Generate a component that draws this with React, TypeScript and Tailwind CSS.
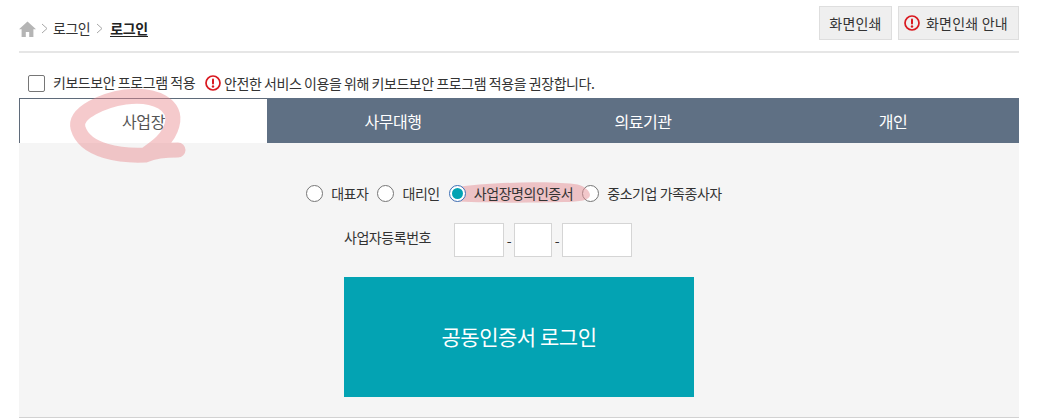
const font = "font-['Noto_Sans_CJK_KR','Noto_Sans',sans-serif]";

function AlertIcon({ size = 16 }: { size?: number }) {
  return (
    <svg width={size} height={size} viewBox="0 0 16 16" className="shrink-0">
      <circle cx="8" cy="8" r="7" fill="none" stroke="#d9181f" strokeWidth="1.7" />
      <rect x="7" y="3.5" width="2" height="6" rx="1" fill="#d9181f" />
      <circle cx="8" cy="11.5" r="1.2" fill="#d9181f" />
    </svg>
  );
}

function Chevron() {
  return (
    <svg width="7" height="11" viewBox="0 0 7 11" className="shrink-0">
      <path d="M1 1l5 4.5L1 10" fill="none" stroke="#a8a8a8" strokeWidth="1" />
    </svg>
  );
}

function Radio({ label, checked }: { label: string; checked?: boolean }) {
  return (
    <label className="flex items-center gap-[8px]">
      {checked ? (
        <span className="relative z-10 flex h-[17px] w-[17px] items-center justify-center rounded-full border border-[#3b6fb5] bg-white">
          <span className="h-[11px] w-[11px] rounded-full bg-[#03a3b3]" />
        </span>
      ) : (
        <span className="h-[17px] w-[17px] rounded-full border border-[#767676] bg-white" />
      )}
      <span className="relative z-10">{label}</span>
    </label>
  );
}

export default function App() {
  return (
    <div className={`${font} relative h-[418px] w-[1044px] overflow-hidden bg-white pl-[19px] pr-[25px] text-[14px] tracking-[-0.45px] text-[#333]`}>
      <div className="flex h-[53px] items-start justify-between border-b-2 border-[#e6e6e6] pt-[6px]">
        <div className="flex items-center gap-[5px] pt-[12px] text-[#333]">
          <svg width="17" height="16" viewBox="0 0 17 16" className="shrink-0">
            <path d="M8.5 0.5L0 8.2h2.6V16h4.2v-5h3.4v5h4.2V8.2H17z" fill="#b5b5b5" />
          </svg>
          <Chevron />
          <span className="mr-[1px]">로그인</span>
          <Chevron />
          <span className="ml-[2px] border-b border-[#222] font-bold leading-[15px] text-[#222]">로그인</span>
        </div>
        <div className="flex gap-[6px] tracking-[0.2px]">
          <button className="h-[34px] w-[73px] border border-[#dedede] bg-[#efefef] text-[#333]">화면인쇄</button>
          <button className="flex h-[34px] w-[121px] items-center justify-start gap-[6px] border border-[#dedede] bg-[#efefef] pl-[5px] text-[#333]">
            <AlertIcon />
            화면인쇄 안내
          </button>
        </div>
      </div>

      <div className="flex h-[45px] items-start pl-[9px] pt-[22px]">
        <span className="h-[17px] w-[17px] rounded-[2px] border border-[#767676] bg-white" />
        <span className="ml-[8px] leading-[15px]">키보드보안 프로그램 적용</span>
        <span className="ml-[10px] flex items-center gap-[3px] leading-[15px]">
          <AlertIcon />
          안전한 서비스 이용을 위해 키보드보안 프로그램 적용을 권장합니다.
        </span>
      </div>

      <div className="grid h-[45px] grid-cols-4 bg-[#5f7084] text-[16px] text-white">
        <div className="flex w-[248px] items-center justify-center border-l border-t border-[#5f6b7a] bg-white text-[#555]">사업장</div>
        <div className="flex items-center justify-center pr-[2px]">사무대행</div>
        <div className="flex items-center justify-center pr-[2px]">의료기관</div>
        <div className="flex items-center justify-center pr-[2px]">개인</div>
      </div>

      <div className="relative h-[275px] border-b border-[#d2d2d2] bg-[#f5f5f5]">
        {/* pink marker behind the selected option */}
        <svg width="145" height="24" viewBox="0 0 145 24" className="pointer-events-none absolute left-[430px] top-[38px]">
          <path d="M2 7C40 1 95 0 125 3C135 4 141 10 141 14C141 19 131 21 115 21C80 22 30 22 4 20Z" fill="#e58f95" fillOpacity="0.5" />
        </svg>
        <div className="flex justify-center gap-[9px] pr-[10px] pt-[41px] leading-[19px]">
          <Radio label="대표자" />
          <Radio label="대리인" />
          <Radio label="사업장명의인증서" checked />
          <Radio label="중소기업 가족종사자" />
        </div>
        <div className="mx-auto mt-[20px] flex w-[350px] items-center">
          <span className="w-[110px] pb-[6px]">사업자등록번호</span>
          <span className="h-[34px] w-[50px] border border-[#d5d5d5] bg-white" />
          <span className="w-[10px] text-center">-</span>
          <span className="h-[34px] w-[38px] border border-[#d5d5d5] bg-white" />
          <span className="w-[10px] text-center">-</span>
          <span className="h-[34px] w-[70px] border border-[#d5d5d5] bg-white" />
        </div>
        <button className="mx-auto mt-[20px] block h-[120px] w-[350px] bg-[#03a3b3] text-[21px] text-white">공동인증서 로그인</button>
      </div>

      {/* pink pen circle drawn over the first tab */}
      <svg width="140" height="90" viewBox="0 0 140 90" className="pointer-events-none absolute left-[60px] top-[82px]">
        <path
          d="M118 68C105 68 92 70 85 73C62 74 25 70 18 46C14 30 45 18 65 15C95 11 118 23 112 43C108 58 95 66 85 73"
          fill="none"
          stroke="#e88a8f"
          strokeOpacity="0.45"
          strokeWidth="15"
          strokeLinecap="round"
          strokeLinejoin="round"
        />
      </svg>
    </div>
  );
}
